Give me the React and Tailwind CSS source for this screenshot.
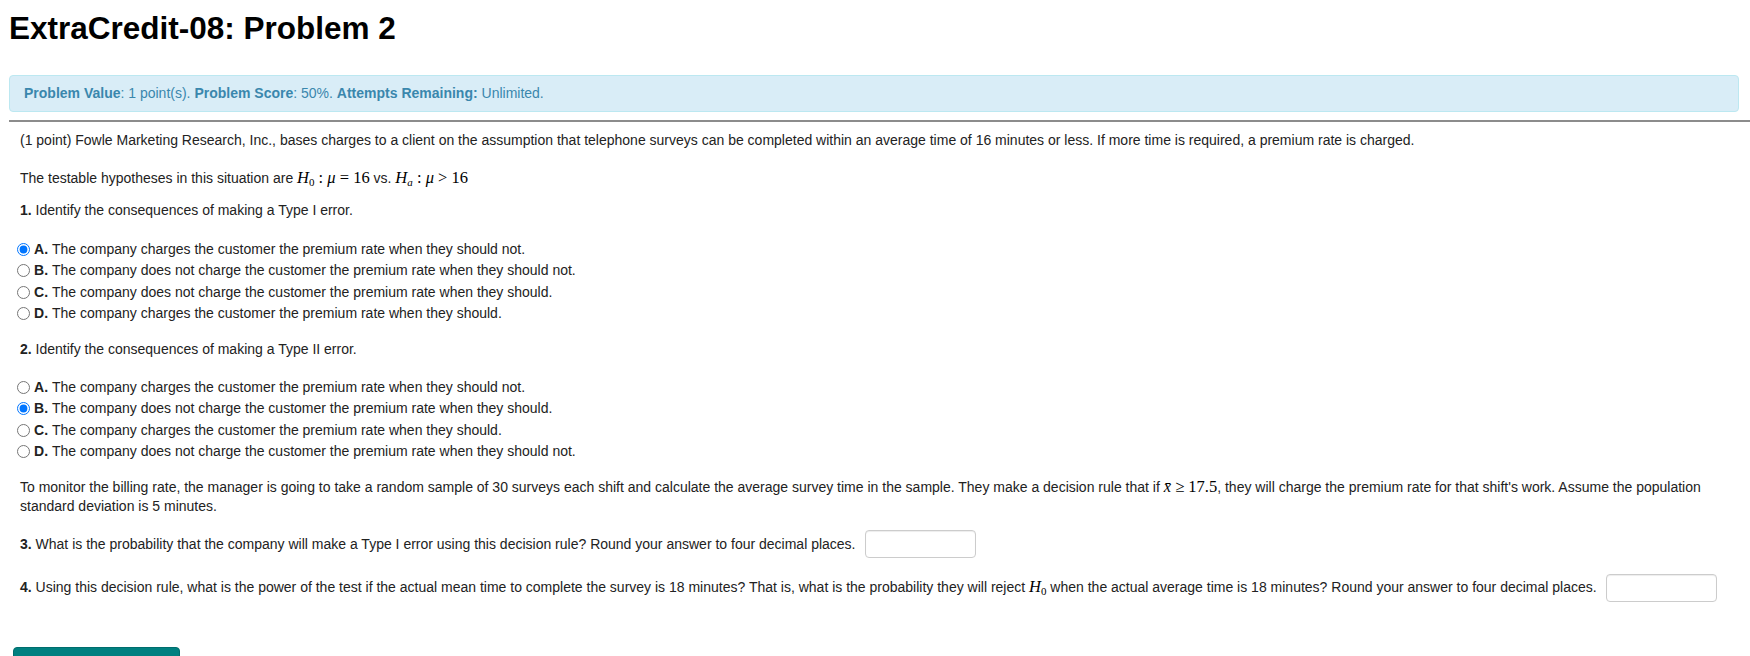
import React from "react";

const M = ({ children }) => (
  <span className="font-['Liberation_Serif','DejaVu_Serif',serif] text-[16.5px] leading-none text-black">
    {children}
  </span>
);

const V = ({ children }) => <i className="italic">{children}</i>;

const Choice = ({ letter, text, checked, name }) => (
  <label className="flex items-center h-[21.25px]">
    <input
      type="radio"
      name={name}
      defaultChecked={checked}
      className="m-0 ml-[8px] mr-[4px] w-[13px] h-[13px] accent-[#0075ff]"
    />
    <b className="mr-[4px]">{letter}.</b>
    <span>{text}</span>
  </label>
);

const Answer = () => (
  <input
    type="text"
    className="w-[111px] h-[28px] ml-[9px] border border-[#cccccc] rounded-[4px] bg-white shadow-[inset_0_1px_1px_rgba(0,0,0,0.075)] outline-none"
  />
);

const part1 = [
  ["A", "The company charges the customer the premium rate when they should not.", true],
  ["B", "The company does not charge the customer the premium rate when they should not.", false],
  ["C", "The company does not charge the customer the premium rate when they should.", false],
  ["D", "The company charges the customer the premium rate when they should.", false],
];

const part2 = [
  ["A", "The company charges the customer the premium rate when they should not.", false],
  ["B", "The company does not charge the customer the premium rate when they should.", true],
  ["C", "The company charges the customer the premium rate when they should.", false],
  ["D", "The company does not charge the customer the premium rate when they should not.", false],
];

export default function App() {
  return (
    <div className="w-[1750px] h-[656px] overflow-hidden bg-white font-['Liberation_Sans',Arial,sans-serif] text-[14px] leading-[21px] text-[#222]">
      <div className="pl-[9px]">
        <h2 className="mt-[8px] text-[31.5px] leading-[40px] font-bold text-black">
          ExtraCredit-08: Problem 2
        </h2>

        <div className="mt-[27px] mr-[11px] h-[37px] flex items-center pl-[14px] bg-[#d9edf7] border border-[#bce8f1] rounded-[4px] text-[#3a87ad]">
          <span>
            <b>Problem Value</b>: 1 point(s). <b>Problem Score</b>: 50%.{" "}
            <b>Attempts Remaining:</b> Unlimited.
          </span>
        </div>

        <div className="mt-[8px] h-[2px] bg-[#8c8c8c]" />

        <div className="pl-[11px]">
          <p className="mt-[8px]">
            (1 point) Fowle Marketing Research, Inc., bases charges to a client on the assumption
            that telephone surveys can be completed within an average time of 16 minutes or less.
            If more time is required, a premium rate is charged.
          </p>

          <p className="mt-[17px]">
            The testable hypotheses in this situation are{" "}
            <M>
              <V>H</V>
              <sub className="text-[11px]">0</sub> : <V>μ</V> = 16
            </M>{" "}
            vs.{" "}
            <M>
              <V>H</V>
              <sub className="text-[11px] italic">a</sub> : <V>μ</V> &gt; 16
            </M>
          </p>

          <p className="mt-[11px]">
            <b>1.</b> Identify the consequences of making a Type I error.
          </p>
        </div>

        <div className="mt-[18px]">
          {part1.map(([l, t, c]) => (
            <Choice key={l} letter={l} text={t} checked={c} name="p1" />
          ))}
        </div>

        <div className="pl-[11px]">
          <p className="mt-[15px]">
            <b>2.</b> Identify the consequences of making a Type II error.
          </p>
        </div>

        <div className="mt-[17px]">
          {part2.map(([l, t, c]) => (
            <Choice key={l} letter={l} text={t} checked={c} name="p2" />
          ))}
        </div>

        <div className="pl-[11px] pr-[20px]">
          <p className="mt-[16px] leading-[19px]">
            To monitor the billing rate, the manager is going to take a random sample of 30 surveys
            each shift and calculate the average survey time in the sample. They make a decision
            rule that if{" "}
            <M>
              <V>x̄</V> ≥ 17.5
            </M>
            , they will charge the premium rate for that shift's work. Assume the population
            standard deviation is 5 minutes.
          </p>

          <div className="mt-[14px] flex items-center h-[28px]">
            <span>
              <b>3.</b> What is the probability that the company will make a Type I error using
              this decision rule? Round your answer to four decimal places.
            </span>
            <Answer />
          </div>

          <div className="mt-[15px] flex items-center h-[29px]">
            <span>
              <b>4.</b> Using this decision rule, what is the power of the test if the actual mean
              time to complete the survey is 18 minutes? That is, what is the probability they will
              reject{" "}
              <M>
                <V>H</V>
                <sub className="text-[11px]">0</sub>
              </M>{" "}
              when the actual average time is 18 minutes? Round your answer to four decimal places.
            </span>
            <Answer />
          </div>
        </div>

        <button className="mt-[45px] ml-[4px] w-[167px] h-[34px] pt-[6px] bg-[#008080] border border-[#006d6d] rounded-[4px] text-white">
          Submit Answers
        </button>
      </div>
    </div>
  );
}
